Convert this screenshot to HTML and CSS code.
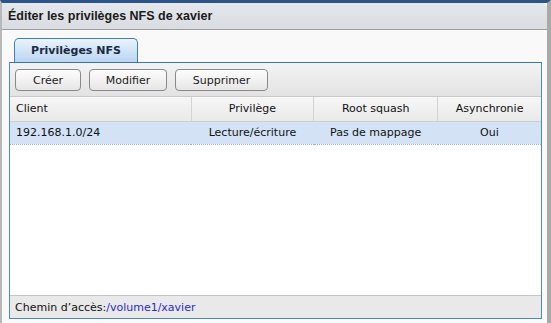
FILE: index.html
```html
<!DOCTYPE html>
<html lang="fr">
<head>
    <meta charset="UTF-8">
    <meta name="viewport" content="width=device-width, initial-scale=1.0">
    <title>Éditer les privilèges NFS de xavier</title>
    <link rel="stylesheet" href="styles.css">
</head>
<body>
    <div class="window">
        <div class="title-bar">Éditer les privilèges NFS de xavier</div>
        <div class="content">
            <div class="tabs">
                <div class="tab">Privilèges NFS</div>
            </div>
            <div class="panel">
                <div class="toolbar">
                    <button class="btn btn-create">Créer</button>
                    <button class="btn btn-edit">Modifier</button>
                    <button class="btn btn-delete">Supprimer</button>
                </div>
                <table class="grid">
                    <thead>
                        <tr>
                            <th class="col-client">Client</th>
                            <th class="col-priv">Privilège</th>
                            <th class="col-root">Root squash</th>
                            <th class="col-async">Asynchronie</th>
                        </tr>
                    </thead>
                    <tbody>
                        <tr class="selected">
                            <td class="col-client">192.168.1.0/24</td>
                            <td class="col-priv">Lecture/écriture</td>
                            <td class="col-root">Pas de mappage</td>
                            <td class="col-async">Oui</td>
                        </tr>
                    </tbody>
                </table>
                <div class="grid-space"></div>
                <div class="footer">Chemin d’accès:<span class="path">/volume1/xavier</span></div>
            </div>
        </div>
    </div>
</body>
</html>
```

FILE: styles.css
```css
* {
    box-sizing: border-box;
    margin: 0;
    padding: 0;
}
body {
    font-family: "DejaVu Sans", Verdana, sans-serif;
    font-size: 11px;
    color: #111;
    background-color: #f8f8f8;
}
.window {
    width: 551px;
    height: 323px;
    display: flex;
    flex-direction: column;
    border-top: 3px solid #2c548a;
    border-left: 2px solid #b8b8b8;
    border-right: 4px solid #a9a9a9;
    background-color: #f9f9f9;
}
.title-bar {
    height: 27px;
    padding: 6px 0 0 6px;
    font-family: "Liberation Sans", Arial, sans-serif;
    font-size: 12.5px;
    font-weight: bold;
    color: #1a1a1a;
    background: linear-gradient(#e4e7eb, #d9dde2);
    border-bottom: 1px solid #9c9c9c;
    border-top-right-radius: 5px;
}
.content {
    flex: 1;
    display: flex;
    flex-direction: column;
    padding: 8px 5px 4px 7px;
}
.tabs {
    display: flex;
    padding-left: 5px;
}
.tab {
    width: 124px;
    height: 25px;
    margin-bottom: -1px;
    padding-top: 5px;
    text-align: center;
    font-weight: bold;
    color: #1b2a44;
    background: linear-gradient(#eaf3fc, #b8d4f0);
    border: 1px solid #3f7fbf;
    border-bottom: none;
    border-radius: 5px 5px 0 0;
}
.panel {
    flex: 1;
    display: flex;
    flex-direction: column;
    border: 1px solid #4d89c4;
    border-top-color: #3a76b4;
    background-color: #fff;
}
.toolbar {
    height: 34px;
    display: flex;
    align-items: center;
    padding: 1px 0 0 5px;
    background: linear-gradient(#f3f3f3, #e3e3e3);
    border-bottom: 1px solid #c9c9c9;
}
.btn {
    height: 22px;
    margin-right: 8px;
    font-family: inherit;
    font-size: 11px;
    color: #222;
    background: linear-gradient(#fdfdfd, #e6e6e6);
    border: 1px solid #8a8a8a;
    border-radius: 4px;
}
.btn-create {
    width: 66px;
}
.btn-edit {
    width: 78px;
}
.btn-delete {
    width: 93px;
}
.grid {
    width: 100%;
    border-collapse: collapse;
    table-layout: fixed;
}
.grid th {
    height: 24px;
    font-weight: normal;
    background: linear-gradient(#f6f6f6, #e9e9e9);
    border-right: 1px solid #d4d4d4;
    border-bottom: 1px solid #cfcfcf;
}
.grid th:last-child {
    border-right: none;
}
.grid td {
    height: 23px;
    text-align: center;
    background-color: #d3e3f5;
    border-top: 1px dotted #9fb0c4;
    border-bottom: 1px dotted #9fb0c4;
}
.grid .col-client {
    width: 181px;
    text-align: left;
    padding-left: 6px;
}
.grid .col-priv {
    width: 122px;
}
.grid .col-root {
    width: 124px;
}
.grid .col-async {
    width: 103px;
}
.grid-space {
    flex: 1;
}
.footer {
    height: 23px;
    padding: 5px 0 0 5px;
    background-color: #e9e9e9;
    border-top: 1px solid #c6c6c6;
}
.path {
    color: #2b2bd0;
}
```
